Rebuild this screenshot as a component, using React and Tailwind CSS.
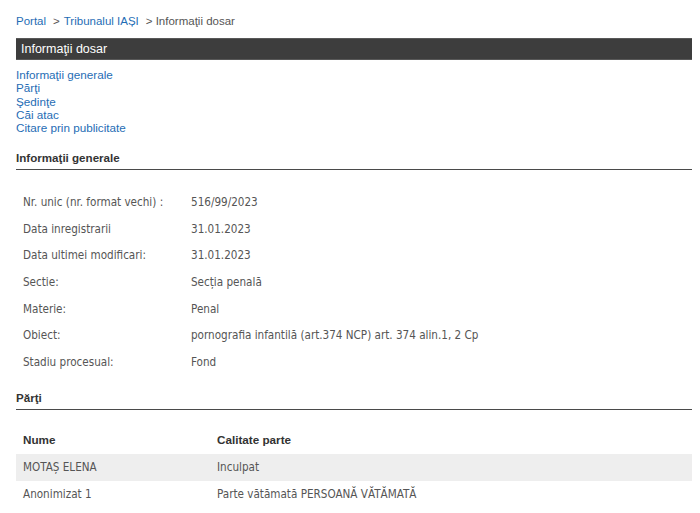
import React from "react";

const info = [
  ["Nr. unic (nr. format vechi) :", "516/99/2023"],
  ["Data inregistrarii", "31.01.2023"],
  ["Data ultimei modificari:", "31.01.2023"],
  ["Sectie:", "Secția penală"],
  ["Materie:", "Penal"],
  ["Obiect:", "pornografia infantilă (art.374 NCP) art. 374 alin.1, 2 Cp"],
  ["Stadiu procesual:", "Fond"],
];

const parti = [
  ["MOTAȘ ELENA", "Inculpat"],
  ["Anonimizat 1", "Parte vătămată PERSOANĂ VĂTĂMATĂ"],
];

const arial = "font-['Liberation_Sans',Arial,sans-serif]";
const tahoma = "font-['DejaVu_Sans_Condensed','DejaVu_Sans',sans-serif]";

export default function App() {
  return (
    <div className={`w-[700px] h-[513px] overflow-hidden bg-white pl-4 pr-2 ${arial}`}>
      <div className="pt-[14px] leading-[14px] text-[11.5px] flex items-center">
        <span className="text-[#1f6db5]">Portal</span>
        <span className="text-[#555] ml-[7px]">&gt;</span>
        <span className="text-[#1f6db5] ml-[4px]">Tribunalul IAȘI</span>
        <span className="text-[#555] ml-[7px]">&gt; Informaţii dosar</span>
      </div>
      <div className="mt-[10px] h-[22px] bg-[#3d3d3d] border-y border-[#585858] flex items-center pl-[5px] text-white text-[12.5px]">
        Informaţii dosar
      </div>
      <div className="mt-[8px] flex flex-col text-[11.7px] leading-[13.3px] text-[#1f6db5]">
        <span>Informaţii generale</span>
        <span>Părţi</span>
        <span>Şedinţe</span>
        <span>Căi atac</span>
        <span>Citare prin publicitate</span>
      </div>
      <div className="mt-[17px] pb-[4px] border-b border-[#4a4a4a] text-[11.6px] leading-[14px] font-bold text-[#333]">
        Informaţii generale
      </div>
      <div className={`mt-[19px] ${tahoma} text-[11.6px] text-[#555]`}>
        {info.map(([k, v]) => (
          <div key={k} className="flex items-center h-[26.67px]">
            <span className="pl-[7px] w-[175px]">{k}</span>
            <span>{v}</span>
          </div>
        ))}
      </div>
      <div className="mt-[15px] pb-[4px] border-b border-[#4a4a4a] text-[11.6px] leading-[14px] font-bold text-[#333]">
        Părţi
      </div>
      <div className="mt-[16px] text-[11.7px]">
        <div className="flex items-center h-[28px] font-bold text-[#333]">
          <span className="pl-[7px] w-[201px]">Nume</span>
          <span>Calitate parte</span>
        </div>
        {parti.map(([n, c], i) => (
          <div
            key={n}
            className={`flex items-center h-[27px] ${tahoma} text-[11.6px] text-[#555] ${i === 0 ? "bg-[#eeeeee]" : ""}`}
          >
            <span className="pl-[7px] w-[201px]">{n}</span>
            <span>{c}</span>
          </div>
        ))}
      </div>
    </div>
  );
}
